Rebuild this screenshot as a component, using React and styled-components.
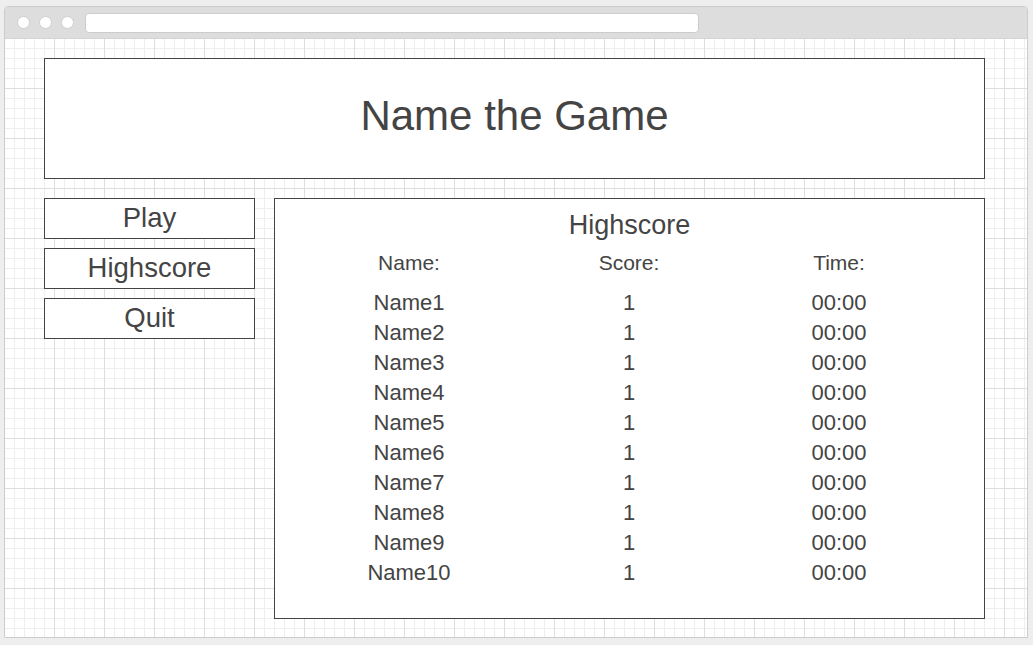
import React from 'react';
import styled, { createGlobalStyle } from 'styled-components';

const GlobalStyle = createGlobalStyle`
    body{
        margin: 0;
        background-color: #eeeeee;
        font-family: "Liberation Sans", Arial, sans-serif;
        color: #444444;
    }
`

const Page = styled.div`
    padding: 6px 0 0 4px;
`

const Frame = styled.div`
    width: 1024px;
    height: 632px;
    box-sizing: border-box;
    border: 1px solid #cccccc;
    border-radius: 4px 4px 0 0;
    display: flex;
    flex-direction: column;
    overflow: hidden;
`

const TitleBar = styled.div`
    height: 31px;
    background-color: #dddddd;
    border-bottom: 1px solid #d4d4d4;
    display: flex;
    align-items: center;
    padding-left: 12px;
    gap: 9px;
`

const Dot = styled.span`
    width: 11px;
    height: 11px;
    border-radius: 50%;
    background-color: #ffffff;
    border: 1px solid #cfcfcf;
`

const AddressBar = styled.div`
    margin-left: 2px;
    width: 612px;
    height: 18px;
    background-color: #ffffff;
    border: 1px solid #cccccc;
    border-radius: 4px;
`

const Canvas = styled.div`
    flex: 1;
    background-color: #ffffff;
    background-image:
        linear-gradient(to right, #dedede 1px, transparent 1px),
        linear-gradient(to bottom, #dedede 1px, transparent 1px),
        linear-gradient(to right, #eeeeee 1px, transparent 1px),
        linear-gradient(to bottom, #eeeeee 1px, transparent 1px);
    background-size: 50px 50px, 50px 50px, 10px 10px, 10px 10px;
    background-position: -1px -1px;
    padding: 19px 0 0 39px;
    display: flex;
    flex-direction: column;
    gap: 19px;
`

const Box = styled.div`
    box-sizing: border-box;
    border: 1px solid #444444;
    background-color: #ffffff;
`

const Header = styled(Box)`
    width: 941px;
    height: 121px;
    display: flex;
    align-items: center;
    justify-content: center;
    padding-bottom: 6px;
    font-size: 42px;
`

const Main = styled.div`
    display: flex;
    gap: 19px;
    align-items: flex-start;
`

const Menu = styled.div`
    width: 211px;
    display: flex;
    flex-direction: column;
    gap: 9px;
`

const MenuButton = styled(Box)`
    height: 41px;
    display: flex;
    align-items: center;
    justify-content: center;
    padding-bottom: 2px;
    font-size: 27.5px;
`

const Panel = styled(Box)`
    width: 711px;
    height: 421px;
    padding-top: 11px;
`

const PanelTitle = styled.div`
    text-align: center;
    font-size: 27px;
    line-height: 30px;
`

const Table = styled.div`
    display: grid;
    grid-template-columns: 220px 220px 200px;
    padding-left: 24px;
    text-align: center;
    font-size: ${(p) => (p.head ? '21px' : '22px')};
    line-height: 30px;
    margin-top: ${(p) => (p.head ? '8px' : '10px')};
`

const rows = Array.from({ length: 10 }, (_, i) => ({
    name: `Name${i + 1}`,
    score: 1,
    time: '00:00',
}));

const App = () => {
  return (
    <Page>
        <GlobalStyle />
        <Frame>
            <TitleBar>
                <Dot />
                <Dot />
                <Dot />
                <AddressBar />
            </TitleBar>
            <Canvas>
                <Header>Name the Game</Header>
                <Main>
                    <Menu>
                        <MenuButton>Play</MenuButton>
                        <MenuButton>Highscore</MenuButton>
                        <MenuButton>Quit</MenuButton>
                    </Menu>
                    <Panel>
                        <PanelTitle>Highscore</PanelTitle>
                        <Table head>
                            <div>Name:</div>
                            <div>Score:</div>
                            <div>Time:</div>
                        </Table>
                        <Table>
                            {rows.map((row) => (
                                <React.Fragment key={row.name}>
                                    <div>{row.name}</div>
                                    <div>{row.score}</div>
                                    <div>{row.time}</div>
                                </React.Fragment>
                            ))}
                        </Table>
                    </Panel>
                </Main>
            </Canvas>
        </Frame>
    </Page>
  )
}

export default App;
